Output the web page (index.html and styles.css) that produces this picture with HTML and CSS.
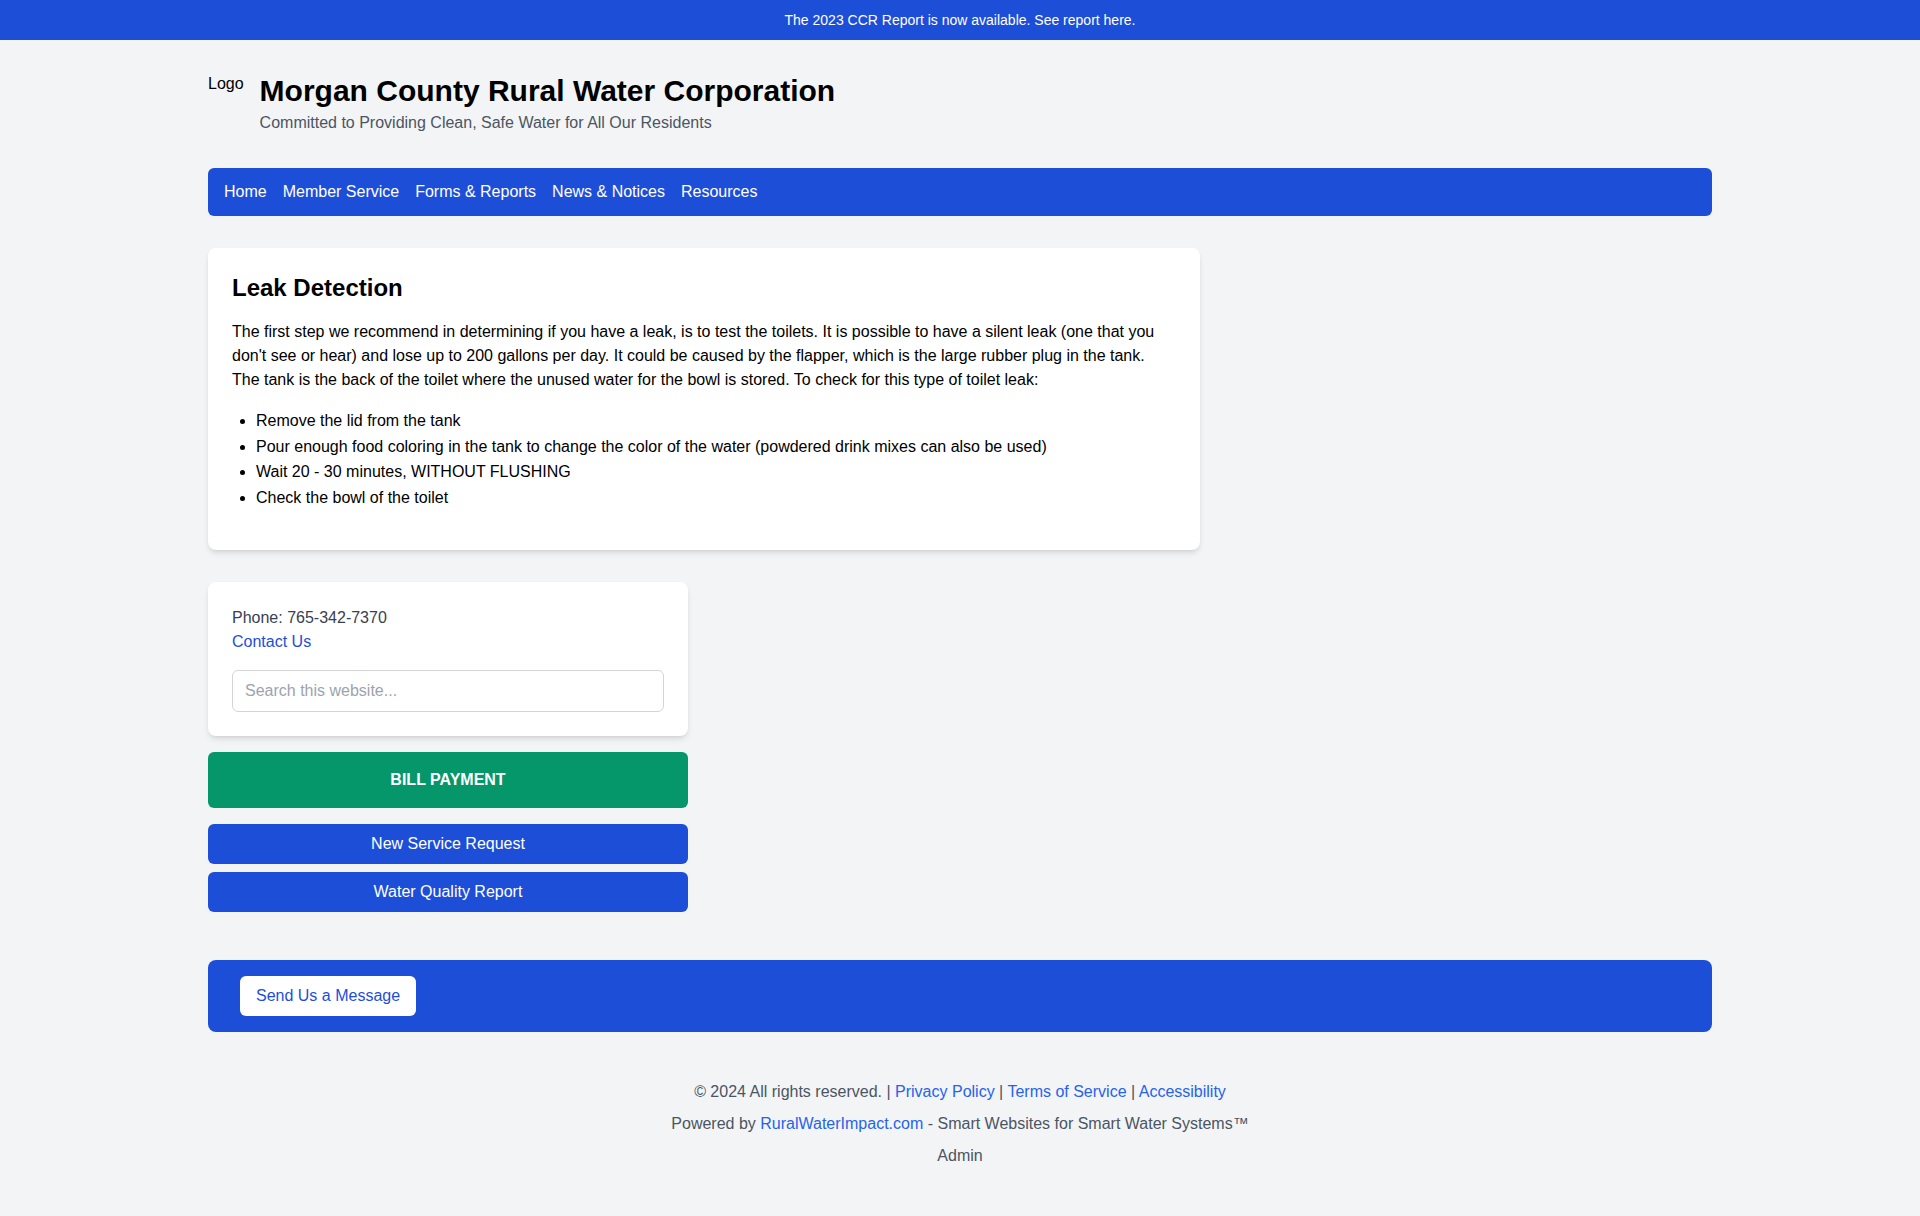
FILE: index.html
```html
<!DOCTYPE html>
<html lang="en">
<head>
<meta charset="utf-8">
<title>Morgan County Rural Water Corporation</title>
<link rel="stylesheet" href="styles.css">
</head>
<body>
<div class="announce">The 2023 CCR Report is now available. See report here.</div>
<div class="container">
  <header class="site-header">
    <span class="logo">Logo</span>
    <div class="brand">
      <h1 class="title">Morgan County Rural Water Corporation</h1>
      <p class="tagline">Committed to Providing Clean, Safe Water for All Our Residents</p>
    </div>
  </header>
  <nav class="main-nav">
    <a href="#">Home</a>
    <a href="#">Member Service</a>
    <a href="#">Forms &amp; Reports</a>
    <a href="#">News &amp; Notices</a>
    <a href="#">Resources</a>
  </nav>
  <div class="layout">
    <main class="card main-card">
      <h2 class="card-title">Leak Detection</h2>
      <p class="card-text">The first step we recommend in determining if you have a leak, is to test the toilets. It is possible to have a silent leak (one that you don't see or hear) and lose up to 200 gallons per day. It could be caused by the flapper, which is the large rubber plug in the tank. The tank is the back of the toilet where the unused water for the bowl is stored. To check for this type of toilet leak:</p>
      <ul class="steps">
        <li>Remove the lid from the tank</li>
        <li>Pour enough food coloring in the tank to change the color of the water (powdered drink mixes can also be used)</li>
        <li>Wait 20 - 30 minutes, WITHOUT FLUSHING</li>
        <li>Check the bowl of the toilet</li>
      </ul>
    </main>
    <aside class="sidebar">
      <div class="card side-card">
        <div class="phone">Phone: 765-342-7370</div>
        <a class="contact" href="#">Contact Us</a>
        <input class="search" type="text" placeholder="Search this website...">
      </div>
      <a class="btn btn-pay" href="#">BILL PAYMENT</a>
      <a class="btn btn-blue btn-first" href="#">New Service Request</a>
      <a class="btn btn-blue" href="#">Water Quality Report</a>
    </aside>
  </div>
  <section class="message-bar">
    <a class="msg-btn" href="#">Send Us a Message</a>
  </section>
  <footer class="site-footer">
    <p>© 2024 All rights reserved. | <a href="#">Privacy Policy</a> | <a href="#">Terms of Service</a> | <a href="#">Accessibility</a></p>
    <p>Powered by <a href="#">RuralWaterImpact.com</a> - Smart Websites for Smart Water Systems™</p>
    <p>Admin</p>
  </footer>
</div>
</body>
</html>
```

FILE: styles.css
```css
* { box-sizing: border-box; }

body {
  margin: 0;
  background: #f3f4f6;
  font-family: "Liberation Sans", Arial, Helvetica, sans-serif;
  font-size: 16px;
  line-height: 24px;
  color: #000;
}

a { text-decoration: none; }

.announce {
  background: #1d4ed8;
  color: #fff;
  text-align: center;
  font-size: 14px;
  line-height: 24px;
  padding: 8px 16px;
}

.container {
  max-width: 1536px;
  margin: 0 auto;
  padding: 0 16px;
}

.site-header {
  display: flex;
  align-items: flex-start;
  gap: 16px;
  padding: 32px 0;
}

.logo {
  height: 64px;
  font-size: 16px;
  line-height: 24px;
}

.brand {
  padding-top: 1px;
}

.title {
  margin: 0;
  font-size: 30px;
  line-height: 36px;
  font-weight: 700;
}

.tagline {
  margin: 2px 0 0;
  color: #4b5563;
  font-size: 16px;
  line-height: 24px;
}

.main-nav {
  display: flex;
  gap: 16px;
  background: #1d4ed8;
  border-radius: 6px;
  padding: 12px 16px;
}

.main-nav a {
  color: #fff;
  font-weight: 500;
}

.layout {
  display: grid;
  grid-template-columns: repeat(3, 1fr);
  gap: 32px;
  margin-top: 32px;
}

.card {
  background: #fff;
  border-radius: 8px;
  box-shadow: 0 4px 6px -1px rgba(0,0,0,0.1), 0 2px 4px -2px rgba(0,0,0,0.1);
  padding: 24px;
}

.main-card {
  grid-column: span 2;
}

.card-title {
  margin: 0 0 16px;
  font-size: 24px;
  line-height: 32px;
  font-weight: 700;
}

.card-text {
  margin: 0 0 16px;
}

.steps {
  margin: 0 0 16px;
  padding-left: 24px;
  list-style: disc;
}

.steps li {
  line-height: 25.6px;
}

.sidebar {
  grid-column: 1;
  display: flex;
  flex-direction: column;
}

.side-card {
  display: flex;
  flex-direction: column;
  align-items: flex-start;
}

.phone {
  color: #374151;
}

.contact {
  color: #1d4ed8;
}

.search {
  margin-top: 16px;
  width: 100%;
  height: 42px;
  padding: 8px 12px;
  border: 1px solid #d1d5db;
  border-radius: 6px;
  font-family: inherit;
  font-size: 16px;
  color: #111827;
  background: #fff;
}

.search::placeholder {
  color: #9ca3af;
}

.btn {
  display: block;
  text-align: center;
  color: #fff;
  border-radius: 6px;
}

.btn-pay {
  margin-top: 16px;
  background: #059669;
  padding: 16px;
  font-weight: 700;
}

.btn-blue {
  background: #1d4ed8;
  padding: 8px 16px;
  font-weight: 500;
  margin-top: 8px;
}

.btn-first {
  margin-top: 16px;
}

.message-bar {
  margin-top: 48px;
  background: #1d4ed8;
  border-radius: 8px;
  padding: 16px 32px;
  display: flex;
}

.msg-btn {
  background: #fff;
  color: #1d4ed8;
  padding: 8px 16px;
  border-radius: 6px;
}

.site-footer {
  margin-top: 48px;
  padding-bottom: 40px;
  text-align: center;
  color: #4b5563;
}

.site-footer p {
  margin: 0 0 8px;
}

.site-footer a {
  color: #2563eb;
}
```
